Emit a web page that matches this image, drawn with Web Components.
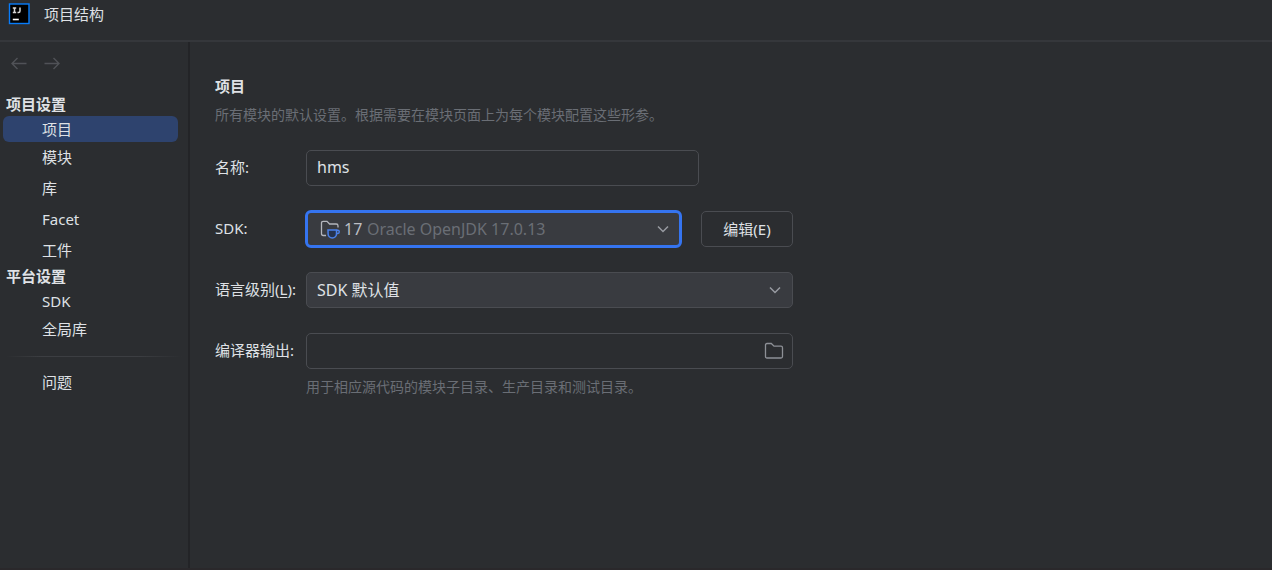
<!DOCTYPE html>
<html lang="zh-CN">
<head>
<meta charset="utf-8">
<title>项目结构</title>
<style>
  :root {
    --bg: #2b2d30; --field: #393b40; --line: #4a4c51; --text: #dfe1e5;
    --muted: #6a6e75; --edge: #232427; --accent: #3574f0; --selected: #2e436e;
  }
  html, body { margin: 0; background: var(--bg); }
  body { font: 15px/20px "Noto Sans", "Noto Sans CJK SC", sans-serif; color: var(--text); }
</style>
</head>
<body>
<project-structure></project-structure>
<script>
const define = (name, html, setup) => customElements.define(name, class extends HTMLElement {
  connectedCallback() {
    if (this.shadowRoot) return;
    const t = document.createElement('template');
    t.innerHTML = html;
    this.attachShadow({ mode: 'open' }).append(t.content.cloneNode(true));
    if (setup) setup(this, this.shadowRoot);
  }
});

define('title-bar', `
<style>
  :host { display: flex; align-items: center; gap: 14px; height: 28px; padding: 0 8px 12px; border-bottom: 2px solid #35373b; }
  svg { display: block; }
  h1 { margin: 0; font: inherit; }
</style>
<svg width="22" height="22" viewBox="0 0 22 22" aria-hidden="true">
  <rect x="1.500" y="1" width="19.500" height="19.500" fill="#000" stroke="#087cfa" stroke-width="1.4"/>
  <path d="M4.800 5h3.400M6.500 5v4.600M4.800 9.600h3.400M12 4.400v3.700q0 1.500-1.500 1.500h-1" fill="none" stroke="#d8d8d8" stroke-width="1.500"/>
  <path d="M4.800 16.500h6" stroke="#fff" stroke-width="1.600"/>
</svg>
<h1><slot></slot></h1>`);

define('history-nav', `
<style>
  :host { display: flex; gap: 15px; padding: 12px 10px 22px; }
  button { display: block; padding: 0; border: 0; background: none; color: #505257; }
  svg { display: block; }
</style>
<button aria-label="后退" disabled><svg width="18" height="18" viewBox="0 0 18 18" fill="none" stroke="currentColor" stroke-width="1.400"><path d="M16.500 9.500H2M7.500 4L2 9.500l5.500 5.500"/></svg></button>
<button aria-label="前进" disabled><svg width="18" height="18" viewBox="0 0 18 18" fill="none" stroke="currentColor" stroke-width="1.400"><path d="M1.500 9.500H16M10.500 4L16 9.500l-5.500 5.500"/></svg></button>`);

define('nav-group', `
<style>
  :host { display: block; }
  h2 { margin: 0; padding: 0 6px 2px; font-size: 15px; line-height: 20px; font-weight: 700; }
</style>
<h2></h2><slot></slot>`, (el, root) => { root.querySelector('h2').textContent = el.getAttribute('heading'); });

define('nav-item', `
<style>
  :host { display: block; padding: 0 10px 0 3px; }
  a { display: block; padding-left: 39px; border-radius: 6px; line-height: 31px; color: inherit; text-decoration: none; }
  :host([lead]) a { line-height: 26px; }
  :host([selected]) a { background: var(--selected); }
</style>
<a href="#"><slot></slot></a>`);

define('side-bar', `
<style>
  :host { display: block; box-sizing: border-box; border-right: 2px solid var(--edge); }
  hr { height: 1px; margin: 11px 6px 10px; border: 0; background: linear-gradient(90deg, transparent, #3c3e42 20%, #3c3e42 75%, transparent); }
</style>
<history-nav></history-nav>
<nav>
  <nav-group heading="项目设置">
    <nav-item lead selected>项目</nav-item>
    <nav-item>模块</nav-item>
    <nav-item>库</nav-item>
    <nav-item>Facet</nav-item>
    <nav-item>工件</nav-item>
  </nav-group>
  <nav-group heading="平台设置">
    <nav-item lead>SDK</nav-item>
    <nav-item>全局库</nav-item>
  </nav-group>
  <hr>
  <nav-item>问题</nav-item>
</nav>`);

const chevron = `<svg class="chevron" width="14" height="14" viewBox="0 0 14 14" fill="none" stroke="#989ba1" stroke-width="1.500" aria-hidden="true"><path d="M2 4.500l5 5 5-5"/></svg>`;

define('project-form', `
<style>
  :host { display: block; }
  h2 { margin: 0; font-size: 15px; line-height: 20px; font-weight: 600; }
  p { margin: 0; font-size: 14px; line-height: 20px; color: var(--muted); }
  .intro { margin-top: 9px; }
  form { display: grid; grid-template-columns: 91px minmax(0, 487px); row-gap: 25px; align-items: center; margin-top: 25px; }
  label { padding-bottom: 2px; white-space: nowrap; }
  input, select, button { box-sizing: border-box; width: 100%; height: 36px; margin: 0; border: 1px solid var(--line);
    border-radius: 5px; background: transparent; color: inherit; font: inherit; outline: 0; }
  input { padding: 0 10px 2px; }
  input, select { font-size: 16px; }
  select { appearance: none; padding: 0 36px 0 10px; background: var(--field); }
  option { background: var(--field); }
  button { padding: 0; }
  .field { position: relative; }
  .name { width: 393px; max-width: 100%; }
  .row { display: grid; grid-template-columns: minmax(0, 1fr) 92px; gap: 20px; }
  .sdk select { padding-left: 60px; color: var(--muted); border-color: transparent; outline: 3px solid var(--accent); outline-offset: -2px; }
  .value { position: absolute; inset: 0 auto 0 14px; display: flex; align-items: center; gap: 4px; pointer-events: none; color: #bcbec4; font-size: 16px; }
  .chevron, .browse { position: absolute; inset: 0 11px 0 auto; margin: auto 0; pointer-events: none; }
  .browse { right: 9px; }
  .output { padding-right: 36px; }
  .note { grid-column: 2; margin-top: -17px; }
  u { text-underline-offset: 2px; }
</style>
<h2>项目</h2>
<p class="intro">所有模块的默认设置。根据需要在模块页面上为每个模块配置这些形参。</p>
<form>
  <label for="name">名称:</label>
  <div class="field"><input class="name" id="name" value="hms"></div>
  <label for="sdk">SDK:</label>
  <div class="row">
    <div class="field sdk">
      <select id="sdk"><option>Oracle OpenJDK 17.0.13</option></select>
      <span class="value">
        <svg width="20" height="20" viewBox="0 0 20 20" fill="none" aria-hidden="true">
          <path d="M6 16.500H3.200Q1.500 16.500 1.500 14.800V4Q1.500 2.300 3.200 2.300H7L9.600 5H16.200Q18 5 18 6.800V8.500" stroke="#b4b6bc" stroke-width="1.300"/>
          <path d="M8 11h8.500v3.700a4.200 4.200 0 0 1-8.400 0z" fill="#25324d" stroke="#4a80ea" stroke-width="1.500"/>
          <path d="M16.500 11.300h1.300q1.500 0 1.500 1.500t-1.500 1.700h-1.300" stroke="#4a80ea" stroke-width="1.400"/>
        </svg>17</span>
      ${chevron}
    </div>
    <button type="button">编辑(E)</button>
  </div>
  <label for="level">语言级别(<u>L</u>):</label>
  <div class="field"><select id="level"><option>SDK 默认值</option></select>${chevron}</div>
  <label for="output">编译器输出:</label>
  <div class="field"><input class="output" id="output">
    <svg class="browse" width="20" height="20" viewBox="0 0 20 20" fill="none" stroke="#8d9096" stroke-width="1.300" aria-hidden="true"><path d="M1.500 4Q1.500 2.500 3 2.500H7.300L10 5.200H17Q18.500 5.200 18.500 6.700V15.500Q18.500 17 17 17H3Q1.500 17 1.500 15.500Z"/></svg>
  </div>
  <p class="note">用于相应源代码的模块子目录、生产目录和测试目录。</p>
</form>`);

define('project-structure', `
<style>
  :host { display: flex; flex-direction: column; box-sizing: border-box; min-height: 100vh; border-bottom: 2px solid #2a282b; }
  .body { flex: 1; display: grid; grid-template-columns: 190px minmax(0, 1fr); }
  main { padding: 34px 25px; }
</style>
<title-bar>项目结构</title-bar>
<div class="body">
  <side-bar></side-bar>
  <main><project-form></project-form></main>
</div>`);
</script>
</body>
</html>
